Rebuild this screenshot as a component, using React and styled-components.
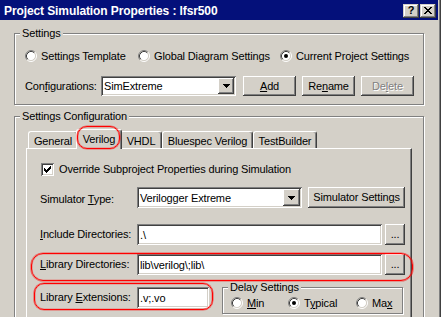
import React from "react";
import styled, { createGlobalStyle } from "styled-components";

const GlobalStyle = createGlobalStyle`
  * { box-sizing: border-box; }
  html, body { margin: 0; padding: 0; background: #d4d0c8; }
  body {
    font-family: "Liberation Sans", Arial, sans-serif;
    font-size: 11px;
    letter-spacing: -0.15px;
    color: #000;
  }
`;

const raised = `
  box-shadow: inset -1px -1px #404040, inset 1px 1px #fff, inset -2px -2px #808080, inset 2px 2px #d4d0c8;
`;
const sunken = `
  box-shadow: inset 1px 1px #808080, inset -1px -1px #fff, inset 2px 2px #404040, inset -2px -2px #d4d0c8;
`;

const Window = styled.div`
  width: 441px;
  height: 317px;
  overflow: hidden;
  background: #d4d0c8;
  padding-right: 3px;
  box-shadow: inset -1px 0 #404040, inset -2px 0 #808080;
  display: flex;
  flex-direction: column;
`;

const TitleBar = styled.div`
  flex: none;
  height: 20px;
  background: #04107a;
  display: flex;
  align-items: center;
  padding: 2px 2px 0 4px;
`;

const Title = styled.div`
  flex: 1;
  color: #fff;
  font-weight: bold;
  font-size: 12px;
  letter-spacing: -0.1px;
  white-space: nowrap;
`;

const CapButton = styled.div`
  flex: none;
  width: 16px;
  height: 14px;
  margin-left: ${(p) => p.$gap || 0}px;
  background: #d4d0c8;
  box-shadow: inset -1px -1px #404040, inset 1px 1px #d4d0c8, inset -2px -2px #808080, inset 2px 2px #fff;
  display: flex;
  align-items: center;
  justify-content: center;
  font-weight: bold;
  font-size: 11px;
  line-height: 1;
  padding-bottom: 1px;
`;

const Body = styled.div`
  flex: 1;
  display: flex;
  flex-direction: column;
  gap: 11px;
  padding: 13px 14px 0 14px;
`;

const Group = styled.div`
  position: relative;
  flex: none;
  width: ${(p) => (p.$w ? `${p.$w}px` : "auto")};
  height: ${(p) => (p.$h ? `${p.$h}px` : "auto")};
  margin-left: ${(p) => p.$ml || 0}px;
  border: 1px solid #808080;
  box-shadow: inset 1px 1px #fff, 1px 1px #fff;
`;

const Legend = styled.span`
  position: absolute;
  top: -7px;
  left: 5px;
  padding: 0 2px;
  line-height: 13px;
  background: #d4d0c8;
  white-space: nowrap;
`;

const SettingsContent = styled.div`
  padding: 16px 10px 8px 10px;
  display: flex;
  flex-direction: column;
  gap: 14px;
`;

const RadioRow = styled.div`
  display: grid;
  grid-template-columns: ${(p) => p.$cols};
  height: 12px;
  align-items: center;
`;

const RadioOption = styled.div`
  display: flex;
  align-items: center;
  gap: 4px;
  white-space: nowrap;
  line-height: 12px;
`;

const RadioSvg = styled.svg`
  flex: none;
  display: block;
`;

const Acc = styled.span`
  text-decoration: underline;
  text-decoration-thickness: 1px;
  text-underline-offset: 1px;
`;

const ConfigRow = styled.div`
  display: flex;
  align-items: center;
  height: 20px;
`;

const RowLabel = styled.div`
  flex: none;
  width: ${(p) => p.$w}px;
  padding-top: ${(p) => p.$dy || 0}px;
  white-space: nowrap;
  line-height: 13px;
`;

const Combo = styled.div`
  flex: none;
  width: ${(p) => p.$w}px;
  height: ${(p) => p.$h}px;
  background: #fff;
  padding: 2px;
  ${sunken}
  display: flex;
  align-items: stretch;
`;

const ComboText = styled.div`
  flex: 1;
  padding-left: 1px;
  display: flex;
  align-items: center;
  white-space: nowrap;
  overflow: hidden;
`;

const DropButton = styled.div`
  flex: none;
  width: ${(p) => p.$w}px;
  background: #d4d0c8;
  ${raised}
  display: flex;
  align-items: center;
  justify-content: center;
`;

const ButtonGroup = styled.div`
  display: flex;
  gap: 6px;
  margin-left: ${(p) => p.$ml || 0}px;
`;

const Button = styled.div`
  flex: none;
  width: ${(p) => p.$w}px;
  height: ${(p) => p.$h || 20}px;
  margin-left: ${(p) => p.$ml || 0}px;
  background: #d4d0c8;
  ${raised}
  display: flex;
  align-items: center;
  justify-content: center;
  white-space: nowrap;
  line-height: 13px;
  color: ${(p) => (p.$disabled ? "#808080" : "#000")};
  text-shadow: ${(p) => (p.$disabled ? "1px 1px 0 #fff" : "none")};
`;

const TabsArea = styled.div`
  padding: 12px 11px 0 11px;
`;

const TabStrip = styled.div`
  position: relative;
  z-index: 1;
  display: flex;
  align-items: flex-end;
  height: 19px;
  padding-left: 2px;
`;

const Tab = styled.div`
  position: relative;
  flex: none;
  width: ${(p) => p.$w + (p.$active ? 4 : 0)}px;
  height: ${(p) => (p.$active ? 20 : 17)}px;
  margin: ${(p) => (p.$active ? "0 -2px -1px -2px" : "0")};
  z-index: ${(p) => (p.$active ? 2 : 0)};
  background: #d4d0c8;
  border-left: 1px solid #fff;
  border-top: 1px solid #fff;
  border-right: 1px solid #404040;
  border-radius: 3px 3px 0 0;
  box-shadow: inset -1px 0 #808080;
  padding-top: 3px;
  line-height: 13px;
  text-align: center;
  white-space: nowrap;
`;

const Panel = styled.div`
  border-top: 1px solid #fff;
  border-left: 1px solid #fff;
  border-right: 1px solid #404040;
  box-shadow: inset -1px 0 #808080;
  padding: 14px 6px 40px 13px;
  display: flex;
  flex-direction: column;
`;

const CheckRow = styled.div`
  display: flex;
  align-items: center;
  gap: 5px;
  height: 13px;
  line-height: 13px;
  white-space: nowrap;
`;

const CheckBox = styled.div`
  flex: none;
  width: 13px;
  height: 13px;
  margin-left: 1px;
  background: #fff;
  ${sunken}
`;

const FormRow = styled.div`
  position: relative;
  display: flex;
  align-items: ${(p) => p.$align || "center"};
  height: ${(p) => p.$h || 21}px;
  margin-top: ${(p) => p.$mt}px;
`;

const FieldGroup = styled.div`
  position: relative;
  display: flex;
  align-items: center;
  height: 21px;
`;

const TextBox = styled.div`
  flex: none;
  width: ${(p) => p.$w}px;
  height: 21px;
  background: #fff;
  padding: 2px 2px 2px 3px;
  ${sunken}
  display: flex;
  align-items: center;
  white-space: nowrap;
  overflow: hidden;
`;

const DelayContent = styled.div`
  padding: 9px 0 0 8px;
`;

const Oval = styled.div`
  position: absolute;
  pointer-events: none;
  top: ${(p) => p.$t}px;
  right: ${(p) => p.$r}px;
  bottom: ${(p) => p.$b}px;
  left: ${(p) => p.$l}px;
  border: 1px solid #ff0000;
  box-shadow: 0 0 0 0.6px rgba(255, 0, 0, 0.55), inset 0 0 0 0.6px rgba(255, 0, 0, 0.35);
  border-radius: ${(p) => p.$rad}px;
  z-index: 3;
`;

const Radio = ({ checked }) => (
  <RadioSvg width="12" height="12" viewBox="0 0 12 12">
    <circle cx="6" cy="6" r="4.5" fill="#fff" />
    <path d="M2.11 9.89A5.5 5.5 0 0 1 9.89 2.11" stroke="#808080" fill="none" />
    <path d="M9.89 2.11A5.5 5.5 0 0 1 2.11 9.89" stroke="#fff" fill="none" />
    <path d="M2.82 9.18A4.5 4.5 0 0 1 9.18 2.82" stroke="#404040" fill="none" />
    <path d="M9.18 2.82A4.5 4.5 0 0 1 2.82 9.18" stroke="#d4d0c8" fill="none" />
    {checked && <circle cx="6" cy="6" r="2" fill="#000" />}
  </RadioSvg>
);

const Arrow = () => (
  <svg width="7" height="4" viewBox="0 0 7 4" style={{ display: "block" }}>
    <path d="M0 0h7v1h-7z M1 1h5v1h-5z M2 2h3v1h-3z M3 3h1v1h-1z" fill="#000" />
  </svg>
);

const CloseGlyph = () => (
  <svg width="8" height="7" viewBox="0 0 8 7" style={{ display: "block" }}>
    <path
      d="M0 0h2v1h-2z M6 0h2v1h-2z M1 1h2v1h-2z M5 1h2v1h-2z M2 2h4v1h-4z M3 3h2v1h-2z M2 4h4v1h-4z M1 5h2v1h-2z M5 5h2v1h-2z M0 6h2v1h-2z M6 6h2v1h-2z"
      fill="#000"
    />
  </svg>
);

const CheckGlyph = () => (
  <svg width="13" height="13" viewBox="0 0 13 13" style={{ display: "block" }}>
    <path
      d="M9 3h1v1h-1z M8 4h2v1h-2z M3 5h1v1h-1z M7 5h3v1h-3z M3 6h2v1h-2z M6 6h3v1h-3z M3 7h5v1h-5z M4 8h3v1h-3z M5 9h1v1h-1z"
      fill="#000"
    />
  </svg>
);

export default function App() {
  return (
    <>
      <GlobalStyle />
      <Window>
        <TitleBar>
          <Title>Project Simulation Properties : lfsr500</Title>
          <CapButton>?</CapButton>
          <CapButton $gap={1}>
            <CloseGlyph />
          </CapButton>
        </TitleBar>

        <Body>
          <Group>
            <Legend>Settings</Legend>
            <SettingsContent>
              <RadioRow $cols="113px 142px auto">
                <RadioOption>
                  <Radio />
                  Settings Template
                </RadioOption>
                <RadioOption>
                  <Radio />
                  Global Diagram Settings
                </RadioOption>
                <RadioOption>
                  <Radio checked />
                  Current Project Settings
                </RadioOption>
              </RadioRow>
              <ConfigRow>
                <RowLabel $w={76}>
                  Con<Acc>f</Acc>igurations:
                </RowLabel>
                <Combo $w={135} $h={20}>
                  <ComboText>SimExtreme</ComboText>
                  <DropButton $w={16}>
                    <Arrow />
                  </DropButton>
                </Combo>
                <ButtonGroup $ml={7}>
                  <Button $w={53}>
                    <Acc>A</Acc>dd
                  </Button>
                  <Button $w={53}>
                    Re<Acc>n</Acc>ame
                  </Button>
                  <Button $w={53} $disabled>
                    De<Acc>l</Acc>ete
                  </Button>
                </ButtonGroup>
              </ConfigRow>
            </SettingsContent>
          </Group>

          <Group>
            <Legend>Settings Configuration</Legend>
            <TabsArea>
              <TabStrip>
                <Tab $w={50}>General</Tab>
                <Tab $w={42} $active>
                  Verilog
                  <Oval $t={-4} $r={1} $b={0} $l={0} $rad={10} />
                </Tab>
                <Tab $w={42}>VHDL</Tab>
                <Tab $w={91}>Bluespec Verilog</Tab>
                <Tab $w={64}>TestBuilder</Tab>
              </TabStrip>
              <Panel>
                <CheckRow>
                  <CheckBox>
                    <CheckGlyph />
                  </CheckBox>
                  Override Subproject Properties during Simulation
                </CheckRow>

                <FormRow $mt={11}>
                  <RowLabel $w={97} $dy={3}>
                    Simulator <Acc>T</Acc>ype:
                  </RowLabel>
                  <Combo $w={165} $h={21}>
                    <ComboText>Verilogger Extreme</ComboText>
                    <DropButton $w={17}>
                      <Arrow />
                    </DropButton>
                  </Combo>
                  <Button $w={97} $h={21} $ml={6}>
                    Simulator Settin<Acc>g</Acc>s
                  </Button>
                </FormRow>

                <FormRow $mt={16}>
                  <RowLabel $w={97}>
                    <Acc>I</Acc>nclude Directories:
                  </RowLabel>
                  <TextBox $w={245}>.\</TextBox>
                  <Button $w={20} $h={21} $ml={3}>
                    ...
                  </Button>
                </FormRow>

                <FormRow $mt={9}>
                  <RowLabel $w={97}>
                    <Acc>L</Acc>ibrary Directories:
                  </RowLabel>
                  <TextBox $w={245}>lib\verilog\;lib\</TextBox>
                  <Button $w={20} $h={21} $ml={3}>
                    ...
                  </Button>
                  <Oval $t={-1} $r={-8} $b={-6} $l={-9} $rad={12} />
                </FormRow>

                <FormRow $mt={12} $h={27} $align="flex-start">
                  <FieldGroup>
                    <RowLabel $w={97}>
                      Library <Acc>E</Acc>xtensions:
                    </RowLabel>
                    <TextBox $w={72}>.v;.vo</TextBox>
                    <Oval $t={-4} $r={-4} $b={-2} $l={-6} $rad={10} />
                  </FieldGroup>
                  <Group $w={181} $h={27} $ml={13}>
                    <Legend>Delay Settings</Legend>
                    <DelayContent>
                      <RadioRow $cols="57px 68px auto">
                        <RadioOption>
                          <Radio />
                          <span>
                            <Acc>M</Acc>in
                          </span>
                        </RadioOption>
                        <RadioOption>
                          <Radio checked />
                          <span>
                            T<Acc>y</Acc>pical
                          </span>
                        </RadioOption>
                        <RadioOption>
                          <Radio />
                          <span>
                            Ma<Acc>x</Acc>
                          </span>
                        </RadioOption>
                      </RadioRow>
                    </DelayContent>
                  </Group>
                </FormRow>
              </Panel>
            </TabsArea>
          </Group>
        </Body>
      </Window>
    </>
  );
}
